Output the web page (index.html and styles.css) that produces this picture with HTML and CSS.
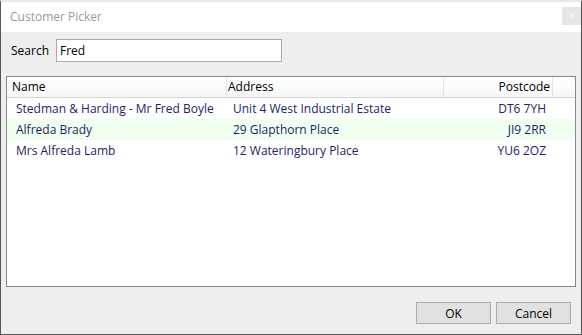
FILE: index.html
```html
<!DOCTYPE html>
<html lang="en">
<head>
    <meta charset="UTF-8">
    <title>Customer Picker</title>
    <link rel="stylesheet" href="styles.css">
</head>
<body>
    <div class="window">
        <div class="titlebar">
            <span class="title">Customer Picker</span>
            <span class="close">&#215;</span>
        </div>

        <div class="content">
            <div class="search-row">
                <label for="search">Search</label>
                <input id="search" type="text" value="Fred">
            </div>

            <div class="list">
                <div class="row header">
                    <div class="cell name">Name</div>
                    <div class="cell address">Address</div>
                    <div class="cell postcode">Postcode</div>
                    <div class="cell filler"></div>
                </div>
                <div class="row item">
                    <div class="cell name">Stedman &amp; Harding - Mr Fred Boyle</div>
                    <div class="cell address">Unit 4 West Industrial Estate</div>
                    <div class="cell postcode">DT6 7YH</div>
                </div>
                <div class="row item alt">
                    <div class="cell name">Alfreda Brady</div>
                    <div class="cell address">29 Glapthorn Place</div>
                    <div class="cell postcode">JI9 2RR</div>
                </div>
                <div class="row item">
                    <div class="cell name">Mrs Alfreda Lamb</div>
                    <div class="cell address">12 Wateringbury Place</div>
                    <div class="cell postcode">YU6 2OZ</div>
                </div>
            </div>

            <div class="buttons">
                <button>OK</button>
                <button>Cancel</button>
            </div>
        </div>
    </div>
</body>
</html>
```

FILE: styles.css
```css
html, body {
    margin: 0;
    padding: 0;
    background: #fff;
}

body {
    font-family: "Open Sans", "Noto Sans", Arial, sans-serif;
    font-size: 12px;
    color: #000;
}

.window {
    width: 582px;
    height: 335px;
    box-sizing: border-box;
    border: 1px solid #555;
    border-top: 2px solid #e8e8e8;
    display: flex;
    flex-direction: column;
}

.titlebar {
    height: 30px;
    background: #fff;
    display: flex;
    align-items: center;
    justify-content: space-between;
    padding-left: 9px;
}

.title {
    color: #9a9a9a;
    font-size: 12px;
    margin-top: -2px;
}

.close {
    width: 19px;
    height: 18px;
    margin-right: 0;
    margin-top: -2px;
    background: #e5e5e5;
    color: #fafafa;
    font-size: 13px;
    line-height: 17px;
    text-align: center;
}

.content {
    flex: 1;
    background: #eeeeee;
    display: flex;
    flex-direction: column;
    padding: 7px 5px 10px 5px;
}

.search-row {
    display: flex;
    align-items: center;
    height: 23px;
}

.search-row label {
    width: 50px;
    padding-left: 5px;
    box-sizing: border-box;
}

.search-row input {
    width: 226px;
    height: 23px;
    box-sizing: border-box;
    border: 1px solid #aaa;
    background: #fff;
    font-family: inherit;
    font-size: 12px;
    padding: 0 3px;
    margin: 0;
    outline: none;
}

.list {
    margin-top: 14px;
    height: 211px;
    box-sizing: border-box;
    border: 1px solid #828790;
    background: #fff;
}

.row {
    display: flex;
    height: 21px;
    align-items: center;
}

.cell {
    box-sizing: border-box;
    white-space: nowrap;
    overflow: hidden;
}

.name { width: 220px; }
.address { width: 217px; }
.postcode { width: 109px; text-align: right; }
.filler { flex: 1; }

.header {
    height: 20px;
    align-items: stretch;
    background: linear-gradient(#ffffff, #f6f7f8);
    border-bottom: 1px solid #d5d5d5;
}

.header .cell {
    line-height: 19px;
    border-right: 1px solid #e3e4e5;
}

.header .name { padding-left: 5px; }
.header .address { padding-left: 1px; }
.header .postcode { padding-right: 2px; }
.header .filler { border-right: none; }

.item {
    color: #1e1e64;
}

.item .name { padding-left: 9px; }
.item .address { padding-left: 6px; }
.item .postcode { padding-right: 7px; }

.item.alt {
    background: #f0fff0;
    margin-right: 2px;
}

.buttons {
    margin-top: auto;
    display: flex;
    justify-content: flex-end;
    gap: 5px;
    padding-right: 5px;
}

button {
    width: 75px;
    height: 22px;
    box-sizing: border-box;
    border: 1px solid #adadad;
    background: #e1e1e1;
    font-family: inherit;
    font-size: 12px;
    color: #000;
    padding: 0;
}
```
